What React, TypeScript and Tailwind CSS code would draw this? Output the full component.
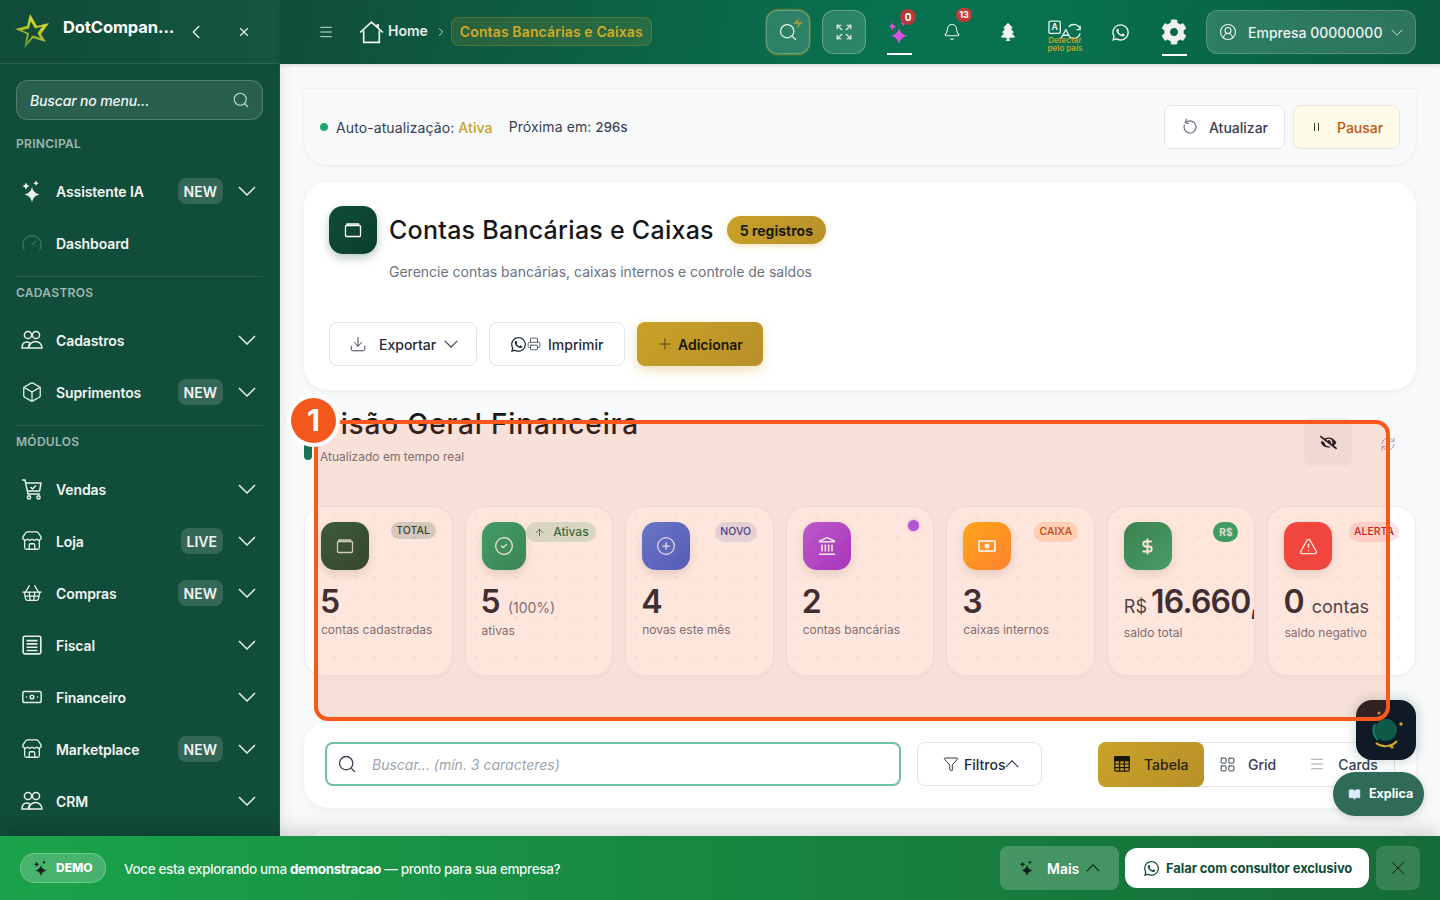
import React from "react";
import {
  Menu, ChevronRight, ChevronLeft, X, Search, Expand, Bell, Gauge, Box, Store,
  ShoppingBasket, Banknote, Download, Printer, Plus, Funnel, LayoutGrid, RotateCcw, CircleCheck, CirclePlus,
  Landmark, DollarSign, TriangleAlert, ArrowUp, CircleUserRound, Zap, BookOpen, RefreshCw,
} from "lucide-react";
import { FaWhatsapp, FaTree, FaCog, FaEyeSlash } from "react-icons/fa";

function star(cx: number, cy: number, r: number) {
  const k = r * 0.18;
  return `M${cx} ${cy - r}Q${cx + k} ${cy - k} ${cx + r} ${cy}Q${cx + k} ${cy + k} ${cx} ${cy + r}Q${cx - k} ${cy + k} ${cx - r} ${cy}Q${cx - k} ${cy - k} ${cx} ${cy - r}Z`;
}

function Spark({ className = "" }: { className?: string }) {
  return (
    <svg viewBox="0 0 22 22" fill="currentColor" className={className}>
      <path d={star(11, 14.5, 7.5)} />
      <path d={star(5, 6, 3.6)} />
      <path d={star(15, 3.2, 2.6)} />
    </svg>
  );
}

function Chev({ up, className = "" }: { up?: boolean; className?: string }) {
  return (
    <svg viewBox="0 0 18 10" fill="none" stroke="currentColor" strokeWidth="1.5" className={className}>
      <path d={up ? "M1 9l8-8 8 8" : "M1 1l8 8 8-8"} />
    </svg>
  );
}

function Logo() {
  return (
    <svg viewBox="14 12 36 37" className="w-[36px] h-[37px]">
      <defs>
        <linearGradient id="lg" x1="0.7" y1="0" x2="0.3" y2="1">
          <stop offset="0" stopColor="#e9e02a" />
          <stop offset="0.6" stopColor="#a9b92c" />
          <stop offset="1" stopColor="#3f8a3c" />
        </linearGradient>
      </defs>
      <path
        d="M30 13L37 25L49 22L41 33L46 41L33 37L24 48L27 33L15 28L27 25Z M30.8 20.2L29 27.4L21.8 29.2L29 32.2L27.2 41.2L32.6 34.6L40.4 37L37.4 32.2L42.2 25.6L35 27.4Z"
        fill="url(#lg)"
        fillRule="evenodd"
      />
    </svg>
  );
}

function People({ className = "" }: { className?: string }) {
  return (
    <svg viewBox="0 0 22 20" fill="none" stroke="currentColor" strokeWidth="1.5" className={className}>
      <circle cx="7" cy="5" r="3.6" />
      <circle cx="15" cy="5" r="3.6" />
      <path d="M1 18c0-4 2-6 5-6 1.5 0 2.5.5 3 1.2-1 1-1.6 2.8-1.6 4.8z" />
      <path d="M8 18c0-4 3-6.6 6.5-6.6S21 14 21 18z" />
    </svg>
  );
}

function CartCheck({ className = "" }: { className?: string }) {
  return (
    <svg viewBox="0 0 22 22" fill="none" stroke="currentColor" strokeWidth="1.5" className={className}>
      <path d="M1 2h3l3 14h12" />
      <path d="M4.6 5H20l-1.4 8H6.4" />
      <path d="M9.5 9l2 2 3.5-3.5" />
      <circle cx="8" cy="19.4" r="1.6" />
      <circle cx="17.5" cy="19.4" r="1.6" />
    </svg>
  );
}

function ListDoc({ className = "" }: { className?: string }) {
  return (
    <svg viewBox="0 0 20 20" fill="none" stroke="currentColor" strokeWidth="1.5" className={className}>
      <rect x="2" y="2" width="16" height="16" rx="1.5" />
      <path d="M5 6h10M5 9h10M5 12h10M5 15h10" />
    </svg>
  );
}

function FlapCard({ className = "" }: { className?: string }) {
  return (
    <svg viewBox="0 0 18 16" fill="none" stroke="currentColor" strokeWidth="1.3" className={className}>
      <rect x="1.5" y="3.5" width="15" height="11" rx="1" />
      <path d="M3 3.5V2h11.5v1.5" />
    </svg>
  );
}

function MoneyFilled({ className = "" }: { className?: string }) {
  return (
    <svg viewBox="0 0 18 14" className={className}>
      <rect x="1" y="2" width="16" height="10" rx="1" fill="none" stroke="currentColor" strokeWidth="2" />
      <circle cx="9" cy="7" r="2.6" fill="currentColor" />
    </svg>
  );
}

function TableIcon({ className = "" }: { className?: string }) {
  return (
    <svg viewBox="0 0 16 16" fill="none" stroke="currentColor" strokeWidth="1.2" className={className}>
      <rect x="0.8" y="0.8" width="14.4" height="14.4" rx="1.2" />
      <rect x="0.8" y="0.8" width="14.4" height="4" fill="currentColor" />
      <path d="M0.8 8h14.4M0.8 11.6h14.4M5.6 4.8v10.4M10.4 4.8v10.4" />
    </svg>
  );
}

function Translate() {
  return (
    <svg viewBox="0 0 36 22" fill="none" className="w-[34px] h-[21px] text-[#e6f3ee]" stroke="currentColor" strokeWidth="1.4">
      <rect x="1" y="1" width="12" height="13" rx="1.5" />
      <text x="7" y="11" textAnchor="middle" fontSize="9" fontWeight="700" fill="currentColor" stroke="none">A</text>
      <path d="M14 19l5-9 4 8M16 16h6" />
      <path d="M22 7a7 7 0 0 1 12 3M34 14a7 7 0 0 1-11 4" />
      <path d="M34 6v4h-4" />
    </svg>
  );
}

const ic = "w-[22px] h-[22px]";

type Row = { label: string; icon: React.ReactNode; badge?: string; chevron?: boolean; dim?: boolean };

function SideRow({ label, icon, badge, chevron = true, dim }: Row) {
  return (
    <div className="h-[52px] flex items-center pl-[5px] pr-[7px] text-white">
      <div className={`w-[22px] flex justify-center ${dim ? "text-[#2a7a60]" : "text-[#e6efec]"}`}>{icon}</div>
      <span className="ml-[13px] text-[14px] font-semibold text-[#f1f5f3] flex-1 tracking-[-0.1px]">{label}</span>
      {badge && (
        <span className="h-[26px] px-[6px] mr-[15px] rounded-lg bg-white/15 flex items-center text-[14px] font-semibold text-[#eef3f1]">{badge}</span>
      )}
      {chevron && <Chev className="w-[18px] h-[10px] text-[#e6efec]" />}
    </div>
  );
}

function SectionLabel({ children }: { children: React.ReactNode }) {
  return <div className="h-[16px] leading-[16px] text-[12px] font-semibold tracking-[0.3px] text-white/60">{children}</div>;
}

function Sidebar() {
  return (
    <aside className="w-[280px] shrink-0 h-full bg-[#114d3b] border-r border-white/5 flex flex-col overflow-hidden relative z-10 shadow-[2px_0_12px_rgba(0,0,0,0.08)]">
      <div className="h-[64px] shrink-0 border-b border-white/10 flex items-center pl-[14px] pr-[28px] bg-[linear-gradient(90deg,#0f4c3a,#155640)]">
        <Logo />
        <span className="ml-[13px] text-[16.5px] font-bold text-white tracking-[-0.1px] -mt-[8px] whitespace-nowrap">DotCompan...</span>
        <ChevronLeft className="ml-auto w-[22px] h-[22px] text-[#e6efec]" strokeWidth={1.5} />
        <X className="ml-[30px] w-[14px] h-[14px] text-[#e6efec]" strokeWidth={2} />
      </div>
      <div className="px-[16px] pt-[16px]">
        <div className="h-[40px] rounded-xl bg-white/10 border border-white/20 flex items-center pl-[13px] pr-[12px]">
          <input
            placeholder="Buscar no menu..."
            className="flex-1 min-w-0 bg-transparent outline-none text-[14px] tracking-[-0.15px] font-medium italic placeholder:text-[#f1f5f3] text-white"
          />
          <Search className="w-[18px] h-[18px] text-[#c6d6d0]" strokeWidth={1.5} />
        </div>
        <div className="mt-[16px]"><SectionLabel>PRINCIPAL</SectionLabel></div>
        <div className="mt-[13px]">
          <SideRow label="Assistente IA" badge="NEW" icon={<Spark className={ic} />} />
          <SideRow label="Dashboard" dim chevron={false} icon={<Gauge className={ic} strokeWidth={1.4} />} />
        </div>
        <div className="mt-[7px] border-t border-white/10" />
        <div className="mt-[8px]"><SectionLabel>CADASTROS</SectionLabel></div>
        <div className="mt-[13px]">
          <SideRow label="Cadastros" icon={<People className={ic} />} />
          <SideRow label="Suprimentos" badge="NEW" icon={<Box className={ic} strokeWidth={1.4} />} />
        </div>
        <div className="mt-[7px] border-t border-white/10" />
        <div className="mt-[8px]"><SectionLabel>MÓDULOS</SectionLabel></div>
        <div className="mt-[13px]">
          <SideRow label="Vendas" icon={<CartCheck className={ic} />} />
          <SideRow label="Loja" badge="LIVE" icon={<Store className={ic} strokeWidth={1.4} />} />
          <SideRow label="Compras" badge="NEW" icon={<ShoppingBasket className={ic} strokeWidth={1.4} />} />
          <SideRow label="Fiscal" icon={<ListDoc className={ic} />} />
          <SideRow label="Financeiro" icon={<Banknote className={ic} strokeWidth={1.6} />} />
          <SideRow label="Marketplace" badge="NEW" icon={<Store className={ic} strokeWidth={1.4} />} />
          <SideRow label="CRM" icon={<People className={ic} />} />
        </div>
      </div>
    </aside>
  );
}

function Header() {
  return (
    <header className="h-[64px] shrink-0 flex items-center pl-[38px] pr-[24px] bg-[linear-gradient(100deg,#114d3b_0%,#08704f_50%,#07724f_65%,#0a5a41_100%)] shadow-[0_1px_4px_rgba(0,0,0,0.15)] relative z-10">
      <Menu className="w-[16px] h-[16px] text-[#cfe0da]" strokeWidth={1.5} />
      <svg viewBox="0 0 24 24" fill="none" stroke="#f1f5f3" strokeWidth="1.6" className="ml-[25px] w-[25px] h-[25px]">
        <path d="M1 12L12 2l11 10" />
        <path d="M4.5 10v11.5h15V10" />
        <path d="M18 4v3" strokeWidth="2.4" />
      </svg>
      <span className="ml-[4px] -mt-[3px] text-[14px] font-semibold text-[#e6efec]">Home</span>
      <ChevronRight className="ml-[6px] w-[14px] h-[14px] text-[#cfe0da]" strokeWidth={1.6} />
      <span className="ml-[3px] -mt-[1px] h-[29px] px-[8px] rounded-lg border border-[#c9a227]/25 bg-[#c9a227]/15 flex items-center text-[14px] tracking-[0.12px] font-semibold text-[#d4a926] whitespace-nowrap">Contas Bancárias e Caixas</span>

      <div className="ml-auto flex items-center">
        <div className="w-[44px] h-[44px] rounded-xl border border-white/25 bg-white/15 relative flex items-center justify-center shadow-[0_-1px_2px_rgba(201,162,39,0.5),0_1px_2px_rgba(201,162,39,0.6)]">
          <Search className="w-[20px] h-[20px] text-[#eef3f1]" strokeWidth={1.5} />
          <Zap className="absolute right-[5px] top-[6px] w-[12px] h-[12px] text-[#9a9a3a]" fill="currentColor" strokeWidth={0} />
        </div>
        <div className="ml-[12px] w-[44px] h-[44px] rounded-xl border border-white/25 bg-white/15 flex items-center justify-center">
          <Expand className="w-[18px] h-[18px] text-[#eef3f1]" strokeWidth={1.5} />
        </div>
        <div className="ml-[11px] w-[44px] h-[44px] flex items-center justify-center relative">
          <Spark className="w-[24px] h-[24px] text-[#d94fe0]" />
          <span className="absolute left-[23px] top-[-1px] w-[16px] h-[16px] rounded-full bg-[#b63a3a] text-white text-[10px] font-bold flex items-center justify-center">0</span>
          <span className="absolute left-[10px] right-[9px] bottom-[-1px] h-[2px] bg-white" />
        </div>
        <div className="ml-[9px] w-[44px] h-[44px] flex items-center justify-center relative">
          <Bell className="w-[18px] h-[18px] text-[#eef3f1]" strokeWidth={1.5} />
          <span className="absolute left-[26px] top-[-2px] w-[16px] h-[14px] rounded-full bg-[#c23b3b] text-white text-[9px] font-bold flex items-center justify-center">13</span>
        </div>
        <div className="ml-[12px] w-[44px] h-[44px] flex items-center justify-center">
          <FaTree className="w-[18px] h-[18px] text-[#eef3f1]" />
        </div>
        <div className="ml-[13px] w-[44px] h-[44px] flex flex-col items-center relative">
          <div className="mt-[10px]"><Translate /></div>
          <div className="absolute top-[26px] text-[8px] leading-[8px] font-semibold text-[#c9a227] text-center whitespace-nowrap">Detectar<br />pelo país</div>
        </div>
        <div className="ml-[11px] w-[44px] h-[44px] flex items-center justify-center">
          <FaWhatsapp className="w-[19px] h-[19px] text-[#eef3f1]" />
        </div>
        <div className="ml-[10px] w-[44px] h-[44px] flex items-center justify-center relative">
          <FaCog className="w-[26px] h-[26px] text-[#eef3f1]" />
          <span className="absolute left-[10px] right-[9px] bottom-[-2px] h-[2px] bg-white" />
        </div>
        <div className="ml-[10px] w-[210px] h-[44px] rounded-xl border border-white/20 bg-white/15 flex items-center pl-[12px] pr-[12px]">
          <CircleUserRound className="w-[18px] h-[18px] text-[#eef3f1]" strokeWidth={1.5} />
          <span className="ml-[11px] text-[14px] font-medium text-[#eef3f1] whitespace-nowrap">Empresa 00000000</span>
          <Chev className="ml-auto w-[12px] h-[7px] text-[#cfe0da]" />
        </div>
      </div>
    </header>
  );
}

function TopCard() {
  return (
    <div className="h-[77px] rounded-b-3xl border-t border-[#eef0f3] bg-[#f8f9fb] shadow-[0_2px_4px_rgba(0,0,0,0.05)] flex items-center pl-[16px] pr-[16px]">
      <span className="w-[8px] h-[8px] rounded-full bg-[#1fa971]" />
      <span className="ml-[8px] text-[14px] tracking-[0.1px] text-[#374151]">Auto-atualização: <span className="text-[#c9a227] font-medium">Ativa</span></span>
      <span className="ml-[16px] text-[14px] tracking-[0.1px] text-[#374151]">Próxima em: <span className="font-medium text-[13px] tracking-[0.2px]">296s</span></span>
      <div className="ml-auto flex items-center gap-[8px]">
        <div className="h-[44px] w-[121px] rounded-lg border border-[#e2e5ea] bg-white flex items-center pl-[17px]">
          <RotateCcw className="w-[16px] h-[16px] text-[#6b7280] rotate-[20deg]" strokeWidth={1.8} />
          <span className="ml-[11px] text-[14px] font-medium text-[#374151]">Atualizar</span>
        </div>
        <div className="h-[44px] w-[107px] rounded-lg border border-[#e9e7dd] bg-[#fffbeb] flex items-center pl-[20px]">
          <span className="flex gap-[3px]">
            <span className="w-[1px] h-[8px] bg-[#3a3a20]" />
            <span className="w-[1px] h-[8px] bg-[#3a3a20]" />
          </span>
          <span className="ml-[18px] text-[14px] font-medium text-[#c2560c]">Pausar</span>
        </div>
      </div>
    </div>
  );
}

function TitleCard() {
  return (
    <div className="mt-[17px] h-[208px] rounded-3xl bg-white shadow-[0_2px_6px_rgba(0,0,0,0.05)] pl-[25px] pt-[24px]">
      <div className="flex items-center">
        <div className="w-[48px] h-[48px] rounded-[14px] bg-[linear-gradient(135deg,#0f4c3a,#0d3d2e)] flex items-center justify-center shadow-[0_4px_10px_rgba(15,76,58,0.3)]">
          <FlapCard className="w-[18px] h-[16px] text-white" />
        </div>
        <h1 className="ml-[12px] mt-[1px] text-[25px] font-medium text-[#15171a] tracking-[0.26px] whitespace-nowrap">Contas Bancárias e Caixas</h1>
        <span className="ml-[13px] h-[28px] w-[99px] rounded-full bg-[linear-gradient(135deg,#c9a227,#b8902a)] flex items-center justify-center text-[14px] font-bold text-[#1c1a12] shadow-[0_2px_6px_rgba(201,162,39,0.3)]">5 registros</span>
      </div>
      <p className="ml-[60px] mt-[8px] leading-[20px] text-[14px] text-[#6b7280]">Gerencie contas bancárias, caixas internos e controle de saldos</p>
      <div className="mt-[40px] flex items-center">
        <div className="w-[148px] h-[44px] rounded-lg border border-[#e2e5ea] bg-white flex items-center pl-[19px]">
          <Download className="w-[18px] h-[18px] text-[#374151]" strokeWidth={1.3} />
          <span className="ml-[12px] text-[14px] font-medium text-[#1f2937]">Exportar</span>
          <Chev className="ml-[8px] w-[14px] h-[8px] text-[#374151]" />
        </div>
        <div className="ml-[12px] w-[136px] h-[44px] rounded-lg border border-[#e2e5ea] bg-white flex items-center pl-[20px]">
          <FaWhatsapp className="w-[17px] h-[17px] text-[#1f2937]" />
          <Printer className="w-[14px] h-[14px] text-[#374151]" strokeWidth={1.4} />
          <span className="ml-[7px] text-[14px] font-medium text-[#1f2937]">Imprimir</span>
        </div>
        <div className="ml-[12px] w-[126px] h-[44px] rounded-lg bg-[linear-gradient(135deg,#c9a227,#b8902a)] flex items-center pl-[19px] shadow-[0_4px_12px_rgba(201,162,39,0.35)]">
          <Plus className="w-[18px] h-[18px] text-[#4a4020]" strokeWidth={1.2} />
          <span className="ml-[4px] text-[14px] font-semibold text-[#1a1608]">Adicionar</span>
        </div>
      </div>
    </div>
  );
}

type Stat = {
  tile: string; tileW?: string; icon: React.ReactNode; badge?: React.ReactNode; value: string; unit?: string; prefix?: string; unitSize?: string; label: string; labelMt: string;
};

const stats: Stat[] = [
  {
    tile: "bg-[linear-gradient(135deg,#1d5b42,#14452f)]", icon: <FlapCard className="w-[18px] h-[16px] text-white/80" />,
    badge: <span className="h-[17px] w-[45px] rounded-full bg-[#0f4c3a]/20 flex items-center justify-center text-[10.5px] font-medium text-[#14452f]">TOTAL</span>,
    value: "5", label: "contas cadastradas", labelMt: "mt-[0px]",
  },
  {
    tile: "bg-[linear-gradient(135deg,#22a874,#1c8e5f)]", tileW: "w-[44px]", icon: <CircleCheck className="w-[20px] h-[20px] text-white" strokeWidth={1.5} />,
    badge: <span className="h-[20px] w-[70px] rounded-full bg-[#22a060]/20 flex items-center pl-[8px] text-[12px] font-medium text-[#166c48]"><ArrowUp className="w-[11px] h-[11px]" strokeWidth={1.8} /><span className="ml-[8px]">Ativas</span></span>,
    value: "5", unit: "(100%)", unitSize: "text-[14px] text-[#6b7280]", label: "ativas", labelMt: "mt-[1px]",
  },
  {
    tile: "bg-[linear-gradient(135deg,#4f7be6,#3a5bd0)]", icon: <CirclePlus className="w-[20px] h-[20px] text-white/90" strokeWidth={1.5} />,
    badge: <span className="h-[20px] w-[42px] rounded-full bg-[#3a4ec0]/15 flex items-center justify-center text-[10.5px] font-medium text-[#2f3c9e]">NOVO</span>,
    value: "4", label: "novas este mês", labelMt: "mt-[0px]",
  },
  {
    tile: "bg-[linear-gradient(135deg,#b05be8,#9b2fd8)]", icon: <Landmark className="w-[20px] h-[20px] text-white" strokeWidth={1.8} />,
    badge: <span className="w-[11px] h-[11px] -mt-[2px] mr-[-2px] rounded-full bg-[#a855f7] shadow-[0_0_3px_rgba(168,85,247,0.6)]" />,
    value: "2", label: "contas bancárias", labelMt: "mt-[0px]",
  },
  {
    tile: "bg-[linear-gradient(135deg,#ffb31a,#ff8a33)]",
    icon: <MoneyFilled className="w-[18px] h-[14px] text-white" />,
    badge: <span className="h-[20px] w-[44px] rounded-full bg-[#fb923c]/25 flex items-center justify-center text-[10.5px] font-medium text-[#c2410c]">CAIXA</span>,
    value: "3", label: "caixas internos", labelMt: "mt-[0px]",
  },
  {
    tile: "bg-[linear-gradient(135deg,#1b8a5a,#2ba874)]", icon: <DollarSign className="w-[17px] h-[17px] text-white" strokeWidth={2.6} />,
    badge: <span className="h-[20px] w-[25px] rounded-full bg-[#22a870] flex items-center justify-center text-[10px] font-bold text-white/85">R$</span>,
    value: "16.660,00", prefix: "R$", label: "saldo total", labelMt: "mt-[3px]",
  },
  {
    tile: "bg-[#ef4444]", icon: <TriangleAlert className="w-[19px] h-[19px] text-white" strokeWidth={1.7} />,
    badge: <span className="h-[20px] w-[50px] rounded-full bg-[#ef4444]/15 flex items-center justify-center text-[10.5px] font-medium text-[#b91c1c]">ALERTA</span>,
    value: "0", unit: "contas", unitSize: "text-[18px] text-[#374151]", label: "saldo negativo", labelMt: "mt-[3px]",
  },
];

function StatCard({ s }: { s: Stat }) {
  return (
    <div className="h-[170px] overflow-hidden rounded-[20px] border border-[#f0f1f4] pt-[15px] px-[16px] bg-white bg-[radial-gradient(circle,#f0f1f4_1px,transparent_1px)] bg-[length:20px_20px] shadow-[0_2px_5px_rgba(0,0,0,0.04)]">
      <div className="flex justify-between items-start">
        <div className={`${s.tileW ?? "w-[48px]"} h-[48px] shrink-0 rounded-[14px] ${s.tile} flex items-center justify-center shadow-[0_4px_10px_rgba(0,0,0,0.12)]`}>{s.icon}</div>
        {s.badge}
      </div>
      <div className="mt-[12px] h-[39px] flex items-baseline whitespace-nowrap">
        {s.prefix && <span className="text-[18px] text-[#374151] mr-[5px] shrink-0">{s.prefix}</span>}
        <span className="shrink-0 text-[32px] leading-[40px] font-semibold text-[#1f2937] tracking-[-0.8px] -ml-[1px]">{s.value}</span>
        {s.unit && <span className={`ml-[8px] ${s.unitSize}`}>{s.unit}</span>}
      </div>
      <div className={`${s.labelMt} text-[12px] leading-[18px] text-[#6b7280] whitespace-nowrap`}>{s.label}</div>
    </div>
  );
}

function Overview() {
  return (
    <>
      <div className="mt-[18px] h-[58px] flex justify-between">
        <div className="flex gap-[8px]">
          <span className="w-[8px] h-[52px] rounded-full bg-[linear-gradient(180deg,#0f4c3a,#1c7a58)]" />
          <div>
            <h2 className="text-[28px] leading-[32px] font-medium text-[#15171a] tracking-[0.85px] whitespace-nowrap">Visão Geral Financeira</h2>
            <p className="mt-[8px] text-[12px] leading-[18px] text-[#6b7280]">Atualizado em tempo real</p>
          </div>
        </div>
        <div className="flex items-end gap-[12px] pr-[4px]">
          <div className="w-[48px] h-[48px] rounded-lg bg-[#f0f0f4] flex items-center justify-center">
            <FaEyeSlash className="w-[17px] h-[17px] text-[#111827]" />
          </div>
          <div className="w-[48px] h-[48px] pt-[4px] flex items-center justify-center">
            <RefreshCw className="w-[16px] h-[16px] text-[#9ca3af]" strokeWidth={1.5} />
          </div>
        </div>
      </div>
      <div className="mt-[40px] grid grid-cols-7 gap-[12px]">
        {stats.map((s, i) => <StatCard key={i} s={s} />)}
      </div>
    </>
  );
}

function FilterCard() {
  return (
    <div className="mt-[46px] h-[86px] rounded-3xl bg-white shadow-[0_2px_6px_rgba(0,0,0,0.05)] px-[21px] pb-[2px] flex items-center">
      <div className="w-[576px] h-[44px] rounded-lg border-2 border-[#6fc0a8] flex items-center pl-[10px]">
        <Search className="w-[20px] h-[20px] text-[#374151]" strokeWidth={1.6} />
        <input
          placeholder="Buscar... (mín. 3 caracteres)"
          className="ml-[15px] flex-1 outline-none bg-transparent text-[14px] italic placeholder:text-[#9ca3af]"
        />
      </div>
      <div className="ml-[16px] w-[125px] h-[44px] rounded-lg border border-[#e2e5ea] flex items-center pl-[25px]">
        <Funnel className="w-[16px] h-[16px] text-[#1f2937]" strokeWidth={1.4} />
        <span className="ml-[5px] text-[14px] font-medium text-[#1f2937]">Filtros</span>
        <Chev up className="w-[14px] h-[8px] text-[#374151]" />
      </div>
      <div className="ml-auto w-[297px] h-[45px] rounded-lg border border-[#e2e5ea] flex items-center">
        <div className="w-[106px] h-[45px] -ml-px rounded-lg bg-[linear-gradient(135deg,#c9a227,#b8902a)] flex items-center pl-[16px]">
          <TableIcon className="w-[16px] h-[16px] text-[#1a1608]" />
          <span className="ml-[14px] text-[14px] font-medium text-[#2a2410]">Tabela</span>
        </div>
        <LayoutGrid className="ml-[15px] w-[17px] h-[17px] text-[#374151]" strokeWidth={1.4} />
        <span className="ml-[12px] text-[14px] font-medium text-[#374151]">Grid</span>
        <Menu className="ml-[33px] w-[16px] h-[16px] text-[#9ca3af]" strokeWidth={1.6} />
        <span className="ml-[13px] text-[14px] font-medium text-[#374151]">Cards</span>
      </div>
    </div>
  );
}

function DemoBar() {
  return (
    <div className="h-[64px] shrink-0 relative z-20 bg-[linear-gradient(90deg,#1aa34a,#156b37)] shadow-[0_-4px_20px_rgba(0,0,0,0.18)] flex items-center pl-[20px] pr-[20px]">
      <div className="w-[86px] h-[30px] rounded-full bg-white/20 border border-white/25 flex items-center pl-[12px]">
        <Spark className="w-[16px] h-[16px] text-[#10231a]" />
        <span className="ml-[7px] text-[12px] font-extrabold text-white">DEMO</span>
      </div>
      <p className="ml-[18px] mt-[2px] text-[13.5px] font-medium text-white/95 tracking-[-0.36px] whitespace-nowrap">
        Voce esta explorando uma <span className="font-bold text-white">demonstracao</span> — pronto para sua empresa?
      </p>
      <div className="ml-auto w-[119px] h-[44px] rounded-lg bg-white/20 flex items-center pl-[19px]">
        <Spark className="w-[16px] h-[16px] text-[#10231a]" />
        <span className="ml-[12px] text-[14px] font-semibold text-white">Mais</span>
        <Chev up className="ml-[7px] w-[14px] h-[8px] text-[#10231a]" />
      </div>
      <div className="ml-[6px] w-[244px] h-[40px] rounded-xl bg-white flex items-center pl-[18px]">
        <FaWhatsapp className="w-[17px] h-[17px] text-[#114d3b]" />
        <span className="ml-[6px] mt-[2px] text-[13px] font-bold tracking-[-0.1px] text-[#114d3b] whitespace-nowrap">Falar com consultor exclusivo</span>
      </div>
      <div className="ml-[7px] w-[44px] h-[44px] rounded-lg bg-white/15 flex items-center justify-center">
        <X className="w-[24px] h-[24px] text-[#10231a]" strokeWidth={1} />
      </div>
    </div>
  );
}

export default function App() {
  return (
    <div className="relative w-[1440px] h-[900px] overflow-hidden flex flex-col bg-[#f8f9fb] [font-family:Inter,sans-serif]">
      <div className="flex-1 min-h-0 flex">
        <Sidebar />
        <div className="flex-1 min-w-0 flex flex-col">
          <Header />
          <main className="flex-1 min-h-0 overflow-hidden px-[24px] pt-[24px]">
            <TopCard />
            <TitleCard />
            <Overview />
            <FilterCard />
            <div className="mt-[22px] h-[160px] rounded-t-3xl bg-white shadow-[0_2px_6px_rgba(0,0,0,0.05)]" />
          </main>
        </div>
      </div>
      <DemoBar />

      {/* floating help */}
      <div className="absolute left-[1356px] top-[700px] z-30 w-[60px] h-[60px] rounded-2xl bg-[#0f1a26] shadow-[0_0_8px_4px_rgba(15,76,58,0.14)] flex items-center justify-center">
        <svg viewBox="0 0 60 60" className="w-[60px] h-[60px]" fill="none">
          <circle cx="30" cy="30" r="11" fill="#0f5a46" />
          <path d="M19 24a13 13 0 0 0 3 16" stroke="#0f7a5c" strokeWidth="2.5" />
          <path d="M20 43c6 5 16 4 21-2" stroke="#d4a926" strokeWidth="2" />
          <circle cx="36" cy="47" r="1.6" fill="#d4a926" />
          <circle cx="45" cy="24" r="1.7" fill="#d4a926" />
          <circle cx="23" cy="13" r="1.5" fill="#d4a926" />
        </svg>
      </div>
      <div className="absolute left-[1333px] top-[772px] z-30 w-[91px] h-[44px] rounded-full bg-[#2f6b58] flex items-center pl-[15px] shadow-[0_2px_8px_rgba(0,0,0,0.15)]">
        <BookOpen className="w-[13px] h-[13px] text-[#dbeafe]" fill="currentColor" strokeWidth={1} />
        <span className="ml-[8px] text-[12.5px] font-bold text-white">Explica</span>
      </div>

      {/* tour highlight */}
      <div className="absolute left-[314px] top-[420px] w-[1076px] h-[301px] z-40 rounded-[14px] border-[4px] border-[#f9581c] bg-[#f9581c]/15 pointer-events-none" />
      <div className="absolute left-[291px] top-[398px] z-50 w-[45px] h-[45px] rounded-full bg-[#f4581c] shadow-[0_0_0_4px_#ffffff] flex items-center justify-center text-[30px] font-bold text-white">1</div>
    </div>
  );
}
